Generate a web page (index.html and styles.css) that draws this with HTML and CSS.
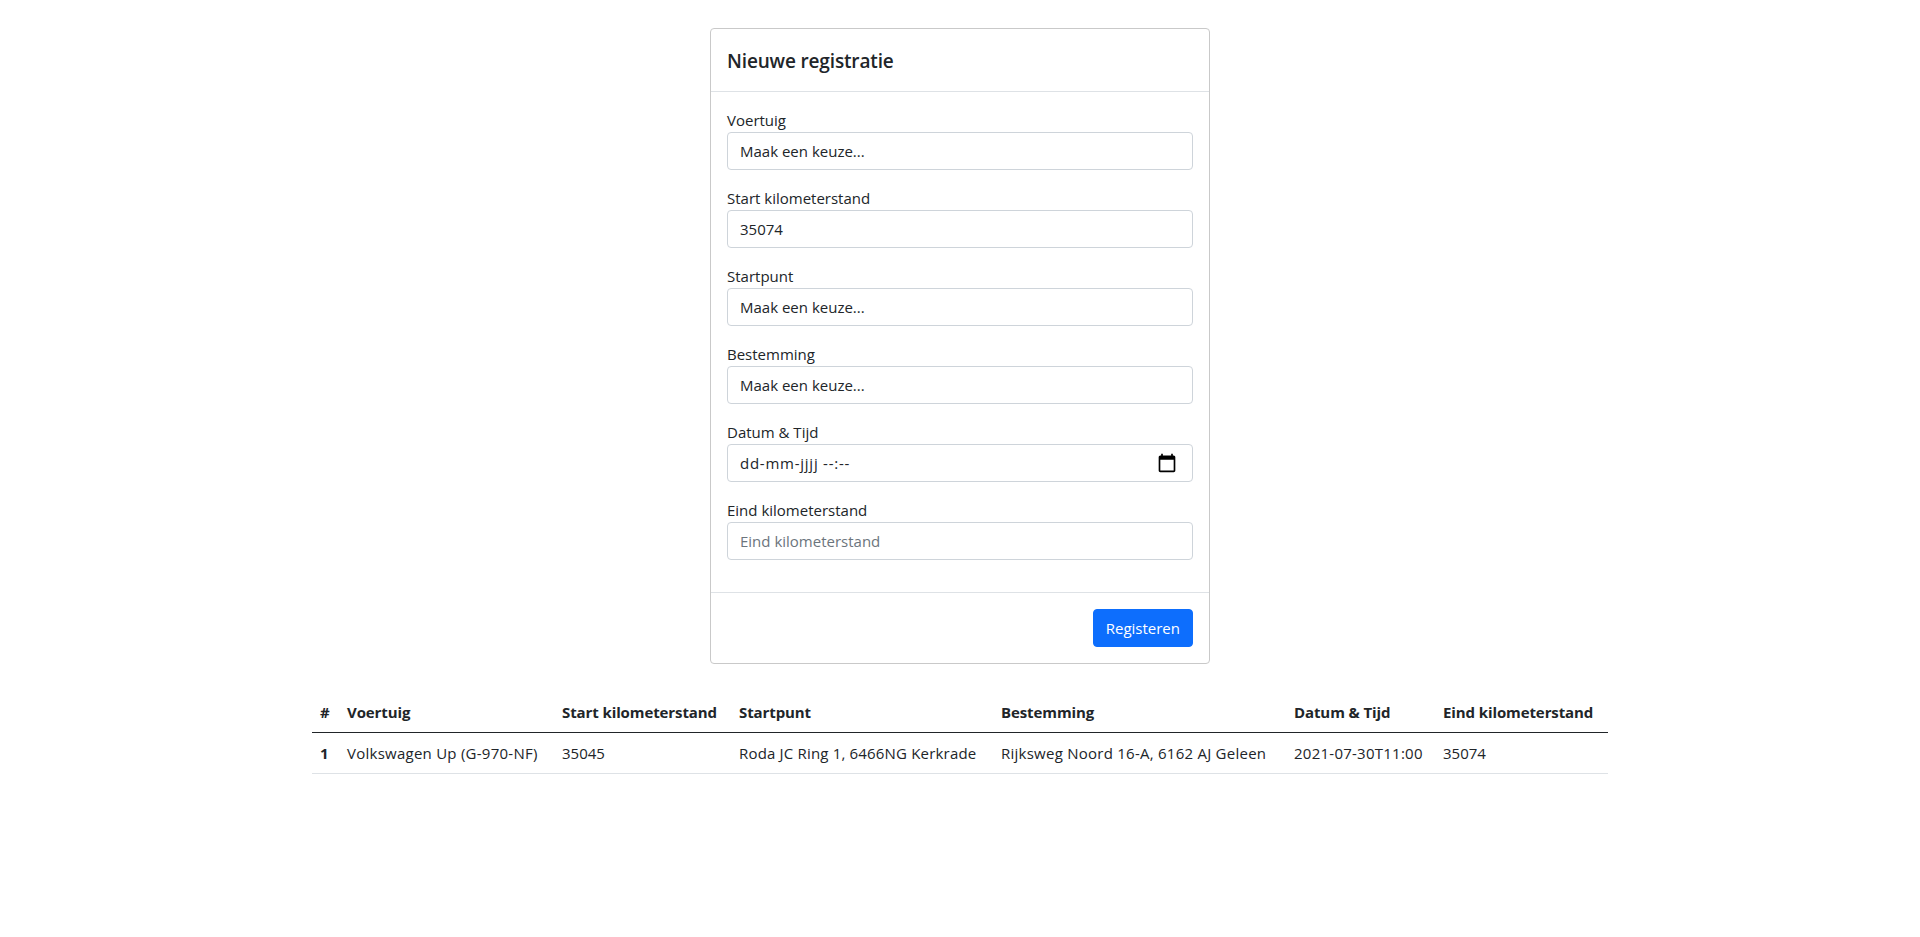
FILE: index.html
```html
<!DOCTYPE html>
<html lang="nl">
<head>
  <meta charset="UTF-8" />
  <meta name="viewport" content="width=device-width, initial-scale=1.0" />
  <title>Nieuwe registratie</title>
  <link rel="stylesheet" href="styles.css">
</head>
<body>
  <div class="container">
    <form class="card">
      <div class="card-header">
        <h5 class="card-title">Nieuwe registratie</h5>
      </div>
      <div class="card-body">
        <div class="form-group">
          <label for="voertuig">Voertuig</label>
          <select id="voertuig" class="form-control">
            <option>Maak een keuze...</option>
          </select>
        </div>
        <div class="form-group">
          <label for="start-km">Start kilometerstand</label>
          <input type="text" id="start-km" class="form-control" value="35074">
        </div>
        <div class="form-group">
          <label for="startpunt">Startpunt</label>
          <select id="startpunt" class="form-control">
            <option>Maak een keuze...</option>
          </select>
        </div>
        <div class="form-group">
          <label for="bestemming">Bestemming</label>
          <select id="bestemming" class="form-control">
            <option>Maak een keuze...</option>
          </select>
        </div>
        <div class="form-group">
          <label>Datum &amp; Tijd</label>
          <div class="form-control date-control">
            <span>dd-mm-jjjj --:--</span>
            <svg class="calendar-icon" width="20" height="20" viewBox="0 0 24 24" fill="#000">
              <path d="M20 3h-1V1h-2v2H7V1H5v2H4c-1.1 0-2 .9-2 2v16c0 1.1.9 2 2 2h16c1.1 0 2-.9 2-2V5c0-1.1-.9-2-2-2zm0 18H4V8h16v13z"/>
            </svg>
          </div>
        </div>
        <div class="form-group">
          <label for="eind-km">Eind kilometerstand</label>
          <input type="text" id="eind-km" class="form-control" placeholder="Eind kilometerstand">
        </div>
      </div>
      <div class="card-footer">
        <button type="button" class="btn-primary">Registeren</button>
      </div>
    </form>

    <table>
      <thead>
        <tr>
          <th class="col-nr">#</th>
          <th class="col-voertuig">Voertuig</th>
          <th class="col-start">Start kilometerstand</th>
          <th class="col-startpunt">Startpunt</th>
          <th class="col-bestemming">Bestemming</th>
          <th class="col-datum">Datum &amp; Tijd</th>
          <th class="col-eind">Eind kilometerstand</th>
        </tr>
      </thead>
      <tbody>
        <tr>
          <th>1</th>
          <td>Volkswagen Up (G-970-NF)</td>
          <td class="num">35045</td>
          <td class="addr">Roda JC Ring 1, 6466NG Kerkrade</td>
          <td>Rijksweg Noord 16-A, 6162 AJ Geleen</td>
          <td>2021-07-30T11:00</td>
          <td class="num">35074</td>
        </tr>
      </tbody>
    </table>
  </div>
</body>
</html>
```

FILE: styles.css
```css
* {
  box-sizing: border-box;
}

body {
  font-family: "Open Sans", "Noto Sans", sans-serif;
  font-size: 15px;
  line-height: 24px;
  color: #212529;
  background-color: #fff;
  margin: 0;
  padding: 0;
}

.container {
  width: 1320px;
  margin: 0 auto;
  padding: 28px 12px 0;
}

.card {
  width: 500px;
  margin: 0 auto 28px;
  background: white;
  border: 1px solid #c9c9c9;
  border-radius: 4px;
}

.card-header {
  padding: 17px 16px 15px;
  border-bottom: 1px solid #dee2e6;
}

.card-title {
  margin: 0;
  font-size: 19px;
  line-height: 30px;
  font-weight: 600;
  letter-spacing: -0.15px;
}

.card-body {
  padding: 16px;
}

.form-group {
  margin-bottom: 16px;
}

label {
  display: block;
}

.form-control {
  display: block;
  width: 100%;
  height: 38px;
  padding: 6px 12px;
  font-family: inherit;
  font-size: 15px;
  line-height: 24px;
  color: #212529;
  background: #fff;
  border: 1px solid #ced4da;
  border-radius: 4px;
  appearance: none;
}

.form-control::placeholder {
  color: #6c757d;
  opacity: 1;
}

.date-control {
  display: flex;
  align-items: center;
  justify-content: space-between;
}

.date-control span {
  letter-spacing: 0.75px;
}

.calendar-icon {
  margin-right: 3px;
}

.card-footer {
  display: flex;
  justify-content: flex-end;
  padding: 16px;
  border-top: 1px solid #dee2e6;
}

.btn-primary {
  height: 38px;
  padding: 6px 12px;
  font-family: inherit;
  font-size: 15px;
  line-height: 24px;
  color: white;
  background: #0d6efd;
  border: 1px solid #0d6efd;
  border-radius: 4px;
}

table {
  width: 100%;
  border-collapse: collapse;
  table-layout: fixed;
}

th, td {
  padding: 8px;
  text-align: left;
  white-space: nowrap;
  font-weight: 400;
  letter-spacing: 0.25px;
  border-bottom: 1px solid #dee2e6;
}

th {
  font-weight: 700;
  letter-spacing: -0.1px;
}

td.num {
  letter-spacing: 0;
}

td.addr {
  letter-spacing: 0.18px;
}

thead th {
  border-bottom: 1px solid #212529;
}

.col-nr { width: 27px; }
.col-voertuig { width: 215px; }
.col-start { width: 177px; }
.col-startpunt { width: 262px; }
.col-bestemming { width: 293px; }
.col-datum { width: 149px; }
.col-eind { width: 173px; }
```
